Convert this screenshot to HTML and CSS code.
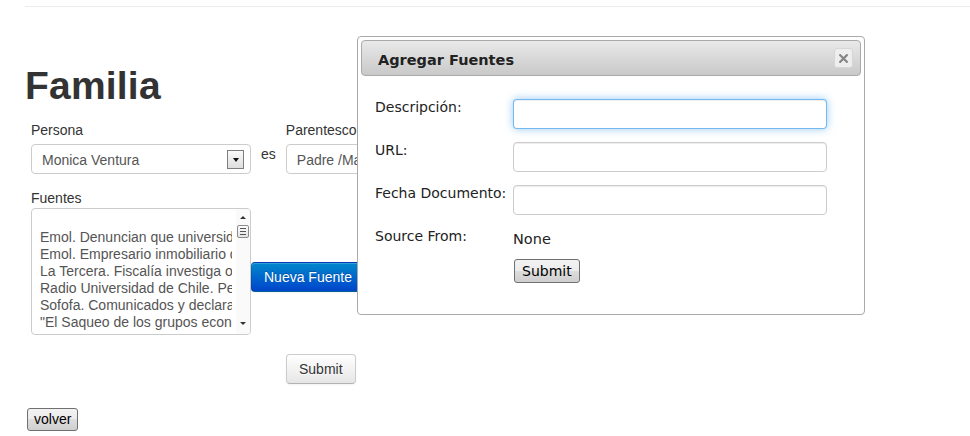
FILE: index.html
```html
<!DOCTYPE html>
<html lang="es">
<head>
<meta charset="utf-8">
<title>Familia</title>
<link rel="stylesheet" href="styles.css">
</head>
<body>
<div class="topline"></div>
<h1 class="title">Familia</h1>
<form class="form">
  <div class="row">
    <div class="field">
      <div class="label">Persona</div>
      <div class="select">
        <span class="select-text">Monica Ventura</span>
        <span class="select-btn"><span class="tri-down"></span></span>
      </div>
    </div>
    <div class="es">es</div>
    <div class="field">
      <div class="label">Parentesco</div>
      <div class="select">
        <span class="select-text">Padre /Madre</span>
      </div>
    </div>
  </div>
  <div class="label fuentes-label">Fuentes</div>
  <div class="row">
    <div class="listbox">
      <div class="options">
        <div class="opt">&nbsp;</div>
        <div class="opt">Emol. Denuncian que universidades privadas lucran</div>
        <div class="opt">Emol. Empresario inmobiliario detenido</div>
        <div class="opt">La Tercera. Fiscalía investiga operaciones</div>
        <div class="opt">Radio Universidad de Chile. Perfil</div>
        <div class="opt">Sofofa. Comunicados y declaraciones</div>
        <div class="opt">"El Saqueo de los grupos económicos"</div>
      </div>
      <div class="scrollbar">
        <span class="sb-up"></span>
        <span class="sb-thumb"><i></i><i></i><i></i></span>
        <span class="sb-space"></span>
        <span class="sb-down"></span>
      </div>
    </div>
    <button type="button" class="btn btn-primary">Nueva Fuente</button>
  </div>
  <div class="submit-row"><button type="button" class="btn">Submit</button></div>
</form>
<button type="button" class="native volver">volver</button>

<div class="dialog">
  <div class="dialog-titlebar">
    <span class="dialog-title">Agregar Fuentes</span>
    <span class="dialog-close">
      <svg width="9" height="9" viewBox="0 0 9 9"><path d="M1.2 1.2 L7.8 7.8 M7.8 1.2 L1.2 7.8" stroke="#858585" stroke-width="2.2" stroke-linecap="square"/></svg>
    </span>
  </div>
  <div class="dialog-body">
    <div class="form-grid">
      <label class="dlabel">Descripción:</label>
      <input class="dinput focus" type="text">
      <label class="dlabel">URL:</label>
      <input class="dinput" type="text">
      <label class="dlabel">Fecha Documento:</label>
      <input class="dinput" type="text">
      <span class="dlabel">Source From:</span>
      <span class="dvalue">None</span>
      <button type="button" class="native dialog-submit">Submit</button>
    </div>
  </div>
</div>
</body>
</html>
```
FILE: styles.css
```css
body {
  margin: 0;
  font-family: "Liberation Sans", Arial, sans-serif;
  font-size: 14px;
  line-height: 20px;
  color: #333;
  background: #fff;
}

.topline {
  margin: 6px 0 0 25px;
  height: 0;
  border-top: 1px solid #ececec;
}

.title {
  margin: 59px 0 0 25px;
  font-size: 39px;
  line-height: 40px;
  font-weight: bold;
  color: #333;
  letter-spacing: 0.2px;
}

.form {
  margin: 14px 0 0 31px;
}

.row {
  display: flex;
  align-items: flex-start;
}

.label {
  line-height: 20px;
}

.field .label {
  margin-bottom: 4px;
}

.select {
  width: 220px;
  height: 30px;
  box-sizing: border-box;
  border: 1px solid #ccc;
  border-radius: 4px;
  background: #fff;
  display: flex;
  align-items: center;
  padding: 0 6px 0 10px;
  color: #555;
  overflow: hidden;
}

.select-text {
  flex: 1;
  white-space: nowrap;
  padding-top: 1px;
}

.select-btn {
  width: 17px;
  height: 19px;
  box-sizing: border-box;
  border: 1px solid #7e7e7e;
  background: linear-gradient(#fafafa, #dedede);
  display: flex;
  align-items: center;
  justify-content: center;
  flex: none;
}

.tri-down {
  width: 0;
  height: 0;
  border-left: 3.5px solid transparent;
  border-right: 3.5px solid transparent;
  border-top: 4px solid #111;
  margin-top: 1px;
}

.es {
  margin: 24px 10px 0;
}

.fuentes-label {
  margin-top: 14px;
}

.listbox {
  width: 220px;
  height: 127px;
  box-sizing: border-box;
  border: 1px solid #ccc;
  border-radius: 4px;
  background: #fff;
  display: flex;
  overflow: hidden;
}

.options {
  flex: 1;
  min-width: 0;
  padding: 3px 4px 3px 8px;
  overflow: hidden;
  color: #555;
}

.opt {
  height: 17px;
  line-height: 17px;
  white-space: nowrap;
  overflow: hidden;
}

.scrollbar {
  width: 14px;
  flex: none;
  box-sizing: border-box;
  padding: 7px 0 9px;
  display: flex;
  flex-direction: column;
  align-items: center;
  background: #fafafa;
}

.sb-up {
  width: 0;
  height: 0;
  border-left: 3px solid transparent;
  border-right: 3px solid transparent;
  border-bottom: 3px solid #333;
}

.sb-down {
  width: 0;
  height: 0;
  border-left: 3px solid transparent;
  border-right: 3px solid transparent;
  border-top: 3px solid #333;
}

.sb-thumb {
  margin-top: 6px;
  width: 12px;
  height: 13px;
  box-sizing: border-box;
  border: 1px solid #8c8c8c;
  border-radius: 2px;
  background: linear-gradient(#fdfdfd, #e4e4e4);
  display: flex;
  flex-direction: column;
  align-items: center;
  justify-content: center;
  gap: 2px;
}

.sb-thumb i {
  display: block;
  width: 6px;
  height: 1px;
  background: #555;
}

.sb-space {
  flex: 1;
}

.btn {
  display: inline-block;
  padding: 4px 12px;
  margin: 0;
  font-family: "Liberation Sans", Arial, sans-serif;
  font-size: 14px;
  line-height: 20px;
  color: #333;
  text-shadow: 0 1px 1px rgba(255, 255, 255, 0.75);
  background: linear-gradient(#ffffff, #e6e6e6);
  border: 1px solid #ccc;
  border-bottom-color: #b3b3b3;
  border-radius: 4px;
  box-shadow: inset 0 1px 0 rgba(255, 255, 255, 0.2), 0 1px 2px rgba(0, 0, 0, 0.05);
}

.btn-primary {
  margin-top: 54px;
  color: #fff;
  text-shadow: 0 -1px 0 rgba(0, 0, 0, 0.25);
  background: linear-gradient(#0088cc, #0044cc);
  border-color: rgba(0, 0, 0, 0.1) rgba(0, 0, 0, 0.1) rgba(0, 0, 0, 0.25);
  white-space: nowrap;
}

.submit-row {
  margin: 19px 0 0 255px;
}

.native {
  display: block;
  margin: 0;
  padding: 1px 6px;
  font-family: "Liberation Sans", Arial, sans-serif;
  font-size: 14px;
  line-height: 19px;
  color: #000;
  border: 1px solid #707070;
  border-radius: 3px;
  background: linear-gradient(#f2f2f2 0%, #ebebeb 50%, #dddddd 50%, #cfcfcf 100%);
}

.volver {
  margin: 24px 0 0 27px;
}

.dialog {
  position: absolute;
  left: 357px;
  top: 36px;
  width: 508px;
  box-sizing: border-box;
  border: 1px solid #aaa;
  border-radius: 4px;
  padding: 3px;
  background: #fff;
  font-family: "DejaVu Sans", Verdana, sans-serif;
  color: #222;
  z-index: 10;
}

.dialog-titlebar {
  height: 36px;
  box-sizing: border-box;
  border: 1px solid #aaa;
  border-radius: 4px;
  background: linear-gradient(#e9e9e9, #c9c9c9);
  display: flex;
  align-items: center;
  justify-content: space-between;
  padding: 0 7px 0 16px;
}

.dialog-title {
  font-weight: bold;
  font-size: 14.5px;
  line-height: 20px;
  padding-top: 4px;
  color: #222;
}

.dialog-close {
  width: 19px;
  height: 20px;
  box-sizing: border-box;
  border: 1px solid #d6d6d6;
  border-radius: 3px;
  background: #eeeeee;
  display: flex;
  align-items: center;
  justify-content: center;
}

.dialog-body {
  padding: 23px 14px 28px;
}

.form-grid {
  display: grid;
  grid-template-columns: 138px 314px;
  row-gap: 13px;
  align-items: start;
}

.dlabel {
  font-size: 14px;
  line-height: 16px;
  color: #222;
  white-space: nowrap;
}

.dinput {
  display: block;
  width: 314px;
  height: 30px;
  box-sizing: border-box;
  margin: 0;
  padding: 4px 6px;
  border: 1px solid #ccc;
  border-radius: 4px;
  background: #fff;
  box-shadow: inset 0 1px 1px rgba(0, 0, 0, 0.075);
  outline: none;
}

.dinput.focus {
  border-color: rgba(82, 168, 236, 0.8);
  box-shadow: inset 0 1px 1px rgba(0, 0, 0, 0.075), 0 0 8px rgba(82, 168, 236, 0.6);
}

.dvalue {
  font-size: 14.5px;
  line-height: 18px;
  margin-top: 2px;
  color: #222;
}

.dialog-submit {
  grid-column: 2;
  justify-self: start;
  margin: -2px 0 0 1px;
  padding: 1px 7px;
  font-family: "DejaVu Sans", Verdana, sans-serif;
  font-size: 14px;
  line-height: 20px;
}
```
